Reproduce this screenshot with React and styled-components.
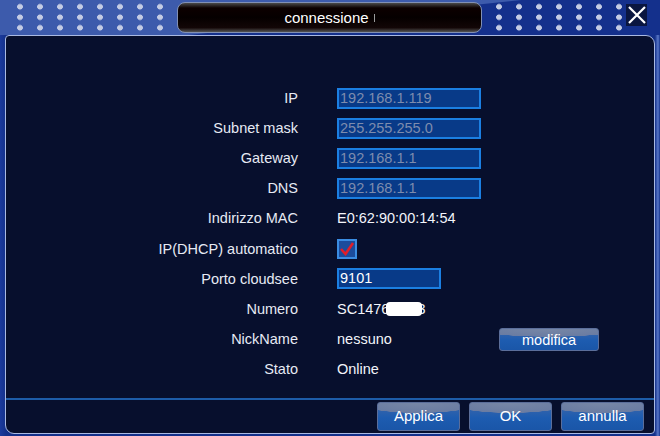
import React from 'react'
import styled, { createGlobalStyle } from 'styled-components'

const GlobalStyle = createGlobalStyle`
    body {
        margin: 0;
        background: #14308c;
        font-family: "Liberation Sans", Arial, sans-serif;
    }
`

const rows = [
    { label: 'IP', input: '192.168.1.119' },
    { label: 'Subnet mask', input: '255.255.255.0' },
    { label: 'Gateway', input: '192.168.1.1' },
    { label: 'DNS', input: '192.168.1.1' },
    { label: 'Indirizzo MAC', text: 'E0:62:90:00:14:54' },
    { label: 'IP(DHCP) automatico', check: true },
    { label: 'Porto cloudsee', edit: '9101' },
    { label: 'Numero', text: 'SC1476', masked: true },
    { label: 'NickName', text: 'nessuno', button: 'modifica' },
    { label: 'Stato', text: 'Online' },
]

export default function App() {
    return (
        <Window>
            <GlobalStyle />
            <Header>
                <Dots $cols={8} />
                <TitleBar>connessione<Tick /></TitleBar>
                <Dots $cols={7} />
                <Close>
                    <svg width="20" height="20" viewBox="0 0 20 20">
                        <path d="M2 2 L18 18 M18 2 L2 18" stroke="#fff" strokeWidth="2.2" />
                    </svg>
                </Close>
            </Header>
            <Panel>
                <Form>
                    {rows.map((r) => (
                        <Row key={r.label}>
                            <Label>{r.label}</Label>
                            <Cell>
                                {r.input && <Field>{r.input}</Field>}
                                {r.edit && <Field $active $width={104}>{r.edit}</Field>}
                                {r.check && (
                                    <Check>
                                        <svg width="16" height="16" viewBox="0 0 16 16">
                                            <path d="M2 8 L6.5 13 L14 2" stroke="#e01e2a" strokeWidth="2.6" fill="none" />
                                        </svg>
                                    </Check>
                                )}
                                {r.text && (
                                    <Value>
                                        {r.text}
                                        {r.masked && <Mask />}
                                        {r.masked && <Tail>3</Tail>}
                                    </Value>
                                )}
                            </Cell>
                            <Cell>{r.button && <SmallButton>{r.button}</SmallButton>}</Cell>
                        </Row>
                    ))}
                </Form>
                <Footer>
                    <Button>Applica</Button>
                    <Button>OK</Button>
                    <Button>annulla</Button>
                </Footer>
            </Panel>
        </Window>
    )
}

const Window = styled.div`
    width: 660px;
    height: 436px;
    display: flex;
    flex-direction: column;
    background: linear-gradient(90deg, #1b3a9c 0, #13308a 6px, #13308a 655px, #5a78c8 658px, #13308a 660px);
    overflow: hidden;
`

const Header = styled.div`
    height: 35px;
    display: flex;
    align-items: flex-start;
    padding-left: 10px;
    background: linear-gradient(174deg, #3d5bac 0, #3d5bac 52%, #14308c 53%);
`

const Dots = styled.div`
    width: ${(p) => p.$cols * 20}px;
    height: 32px;
    margin-top: 1px;
    background-image: radial-gradient(circle, #c4cce4 2.6px, transparent 3.1px);
    background-size: 20px 10.5px;
    background-position: 0 0.5px;
`

const TitleBar = styled.div`
    width: 303px;
    height: 29px;
    margin: 2px 7px 0 7px;
    border: 1px solid #8290b4;
    border-radius: 8px;
    background: linear-gradient(180deg, #4a4a4a 0, #0c0000 5px, #050000 50%, #120606 85%, #555 100%);
    color: #fff;
    font-size: 15px;
    display: flex;
    align-items: center;
    justify-content: center;
`

const Tick = styled.span`
    width: 1px;
    height: 8px;
    margin-left: 5px;
    background: #9a9a9a;
`

const Close = styled.div`
    width: 21px;
    height: 22px;
    margin: 4px 0 0 -3px;
    background: #0a1640;
    display: flex;
    align-items: center;
    justify-content: center;
`

const Panel = styled.div`
    width: 648px;
    height: 397px;
    margin-left: 5px;
    border: 1px solid #a9b9e2;
    border-radius: 4px 9px 4px 9px;
    background: #070f2d;
    display: flex;
    flex-direction: column;
`

const Form = styled.div`
    flex: 1;
    padding-top: 47px;
    display: grid;
    grid-template-columns: 331px 162px 1fr;
    grid-auto-rows: 30.1px;
    align-content: start;
`

const Row = styled.div`
    display: contents;
`

const Label = styled.div`
    padding-right: 39px;
    text-align: right;
    color: #e6eaf4;
    font-size: 14.5px;
    display: flex;
    align-items: center;
    justify-content: flex-end;
`

const Cell = styled.div`
    display: flex;
    align-items: center;
`

const Field = styled.div`
    box-sizing: border-box;
    width: ${(p) => p.$width || 144}px;
    height: 21px;
    border: 2px solid #1b7fe2;
    background: #083a88;
    color: ${(p) => (p.$active ? '#ffffff' : '#7d8cae')};
    font-size: 14.5px;
    line-height: 17px;
    padding-left: 1px;
`

const Check = styled.div`
    box-sizing: border-box;
    width: 20px;
    height: 20px;
    border: 2px solid #3a8ce2;
    background: #1c4c9c;
    display: flex;
    align-items: center;
    justify-content: center;
`

const Value = styled.div`
    color: #f2f4fa;
    font-size: 14.5px;
    display: flex;
    align-items: center;
`

const Mask = styled.span`
    display: inline-block;
    width: 36px;
    height: 14px;
    margin-left: -3px;
    background: #fff;
    border-radius: 4px;
    z-index: 1;
`

const Tail = styled.span`
    margin-left: -5px;
`

const buttonLook = `
    box-sizing: border-box;
    border: 1px solid #5b6e9a;
    border-radius: 3px;
    color: #fff;
    font-family: "Liberation Sans", Arial, sans-serif;
    background:
        radial-gradient(ellipse 120% 60% at 50% 0%, #7787a6 0, #6a7ca2 60%, transparent 62%),
        linear-gradient(180deg, #3f67a8 0, #1d5cb0 55%, #1a56a8 100%);
    display: flex;
    align-items: center;
    justify-content: center;
`

const SmallButton = styled.div`
    ${buttonLook}
    width: 100px;
    height: 23px;
    font-size: 14.5px;
    margin-top: 2px;
`

const Footer = styled.div`
    height: 35px;
    border-top: 2px solid #1d5ca8;
    display: flex;
    justify-content: flex-end;
    gap: 9px;
    padding: 2px 10px 0 0;
    box-sizing: border-box;
`

const Button = styled.div`
    ${buttonLook}
    width: 83px;
    height: 29px;
    font-size: 15px;
    padding-bottom: 2px;
`
